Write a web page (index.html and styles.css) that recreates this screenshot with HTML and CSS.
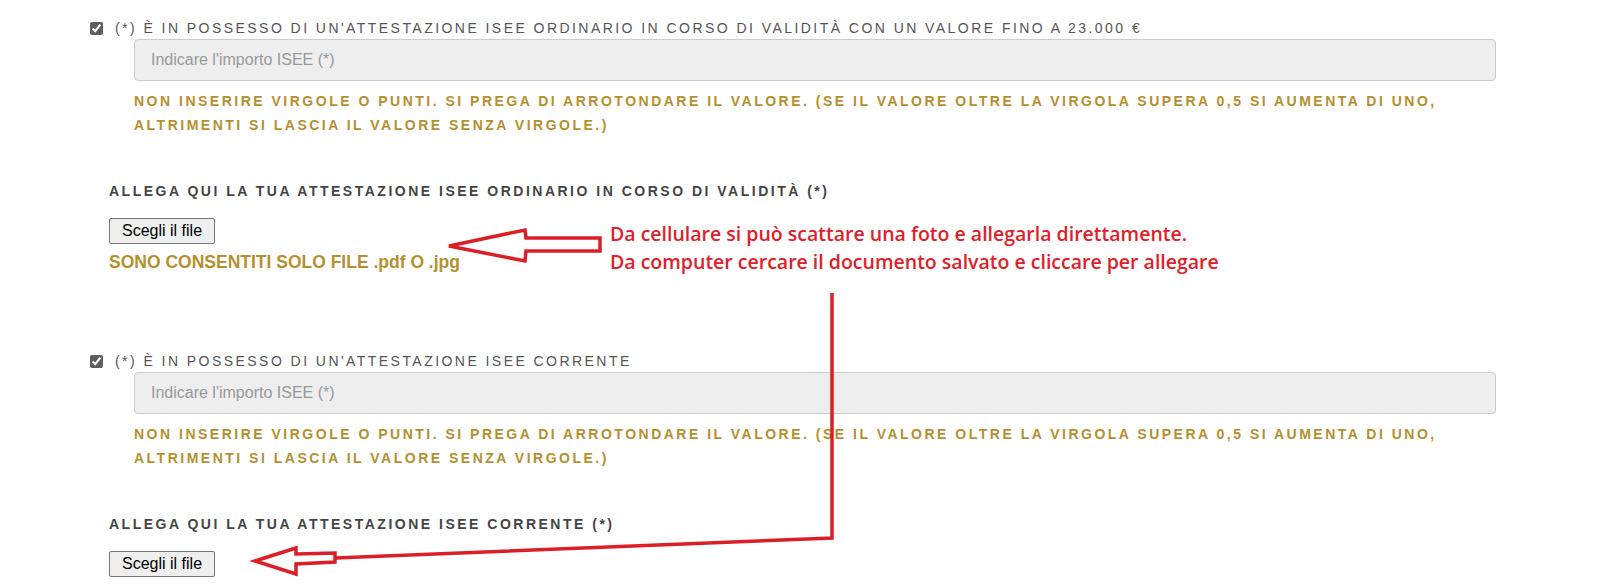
FILE: index.html
```html
<!DOCTYPE html>
<html lang="it">
<head>
    <meta charset="UTF-8">
    <meta name="viewport" content="width=device-width, initial-scale=1.0">
    <title>Attestazione ISEE</title>
    <link rel="stylesheet" href="styles.css">
</head>
<body>
    <div class="page">
        <section class="block">
            <label class="check-row">
                <input type="checkbox" checked>
                <span>(*) È IN POSSESSO DI UN'ATTESTAZIONE ISEE ORDINARIO IN CORSO DI VALIDITÀ CON UN VALORE FINO A 23.000 €</span>
            </label>
            <div class="check-body">
                <input type="text" class="amount" placeholder="Indicare l'importo ISEE (*)">
                <p class="hint">NON INSERIRE VIRGOLE O PUNTI. SI PREGA DI ARROTONDARE IL VALORE. (SE IL VALORE OLTRE LA VIRGOLA SUPERA 0,5 SI AUMENTA DI UNO, ALTRIMENTI SI LASCIA IL VALORE SENZA VIRGOLE.)</p>
            </div>
            <div class="upload">
                <p class="upload-label">ALLEGA QUI LA TUA ATTESTAZIONE ISEE ORDINARIO IN CORSO DI VALIDITÀ (*)</p>
                <button type="button" class="file-btn">Scegli il file</button>
                <p class="file-note">SONO CONSENTITI SOLO FILE .pdf O .jpg</p>
            </div>
        </section>

        <section class="block">
            <label class="check-row">
                <input type="checkbox" checked>
                <span>(*) È IN POSSESSO DI UN'ATTESTAZIONE ISEE CORRENTE</span>
            </label>
            <div class="check-body">
                <input type="text" class="amount" placeholder="Indicare l'importo ISEE (*)">
                <p class="hint">NON INSERIRE VIRGOLE O PUNTI. SI PREGA DI ARROTONDARE IL VALORE. (SE IL VALORE OLTRE LA VIRGOLA SUPERA 0,5 SI AUMENTA DI UNO, ALTRIMENTI SI LASCIA IL VALORE SENZA VIRGOLE.)</p>
            </div>
            <div class="upload">
                <p class="upload-label">ALLEGA QUI LA TUA ATTESTAZIONE ISEE CORRENTE (*)</p>
                <button type="button" class="file-btn">Scegli il file</button>
            </div>
        </section>

        <!-- annotazioni sopra il modulo -->
        <div class="note">
            Da cellulare si può scattare una foto e allegarla direttamente.<br>
            Da computer cercare il documento salvato e cliccare per allegare
        </div>
        <svg class="marks" xmlns="http://www.w3.org/2000/svg" viewBox="0 0 1602 585">
            <polygon points="449,246 525,230 526,238 600,238 600,251 526,251 525,261"/>
            <polyline points="832,293 832,538 335,558"/>
            <polygon points="255,561 296,548 296,554 335,553 335,562 296,564 296,574"/>
        </svg>
    </div>
</body>
</html>
```

FILE: styles.css
```css
body {
    margin: 0;
    font-family: "Liberation Sans", Arial, sans-serif;
    background: #fff;
    overflow: hidden;
}

.page {
    position: relative;
    width: 1602px;
    height: 585px;
    overflow: hidden;
    padding: 18px 106px 0 90px;
    box-sizing: border-box;
}

.block + .block {
    margin-top: 78px;
}

.check-row {
    display: flex;
    align-items: center;
    height: 20px;
    font-size: 14px;
    letter-spacing: 2.45px;
    color: #555;
}

.check-row input {
    width: 13px;
    height: 13px;
    margin: 0 12px 0 0;
    accent-color: #5e5e5e;
}

.check-body {
    margin-left: 44px;
    padding-top: 1px;
}

.amount {
    display: block;
    width: 100%;
    height: 42px;
    box-sizing: border-box;
    padding: 0 16px;
    border: 1px solid #ccc;
    border-radius: 4px;
    background: #eee;
    font: 16px "Liberation Sans", Arial, sans-serif;
    color: #555;
}

.amount::placeholder {
    color: #999;
}

.hint {
    margin: 8px 0 0;
    font-size: 14px;
    font-weight: bold;
    line-height: 24px;
    letter-spacing: 2.5px;
    color: #b5902f;
}

.upload {
    margin: 45px 0 0 19px;
}

.upload-label {
    margin: 0;
    font-size: 14px;
    font-weight: bold;
    line-height: 18px;
    letter-spacing: 2.5px;
    color: #454545;
}

.file-btn {
    display: block;
    margin-top: 18px;
    height: 26px;
    padding: 0 12px;
    font: 16px "Liberation Sans", Arial, sans-serif;
    color: #000;
    background: #efefef;
    border: 1px solid #767676;
    border-radius: 2px;
}

.file-note {
    margin: 7px 0 0;
    font-size: 17.5px;
    font-weight: bold;
    line-height: 22px;
    color: #b5902f;
}

.note {
    position: absolute;
    left: 610px;
    top: 220px;
    font-family: "Open Sans", Lato, sans-serif;
    font-size: 19.5px;
    font-weight: 600;
    line-height: 28px;
    color: #e0202a;
    white-space: nowrap;
}

.marks {
    position: absolute;
    left: 0;
    top: 0;
    width: 1602px;
    height: 585px;
    pointer-events: none;
    fill: none;
    stroke: #dc1f27;
    stroke-width: 3.5;
    stroke-linejoin: miter;
}
```
